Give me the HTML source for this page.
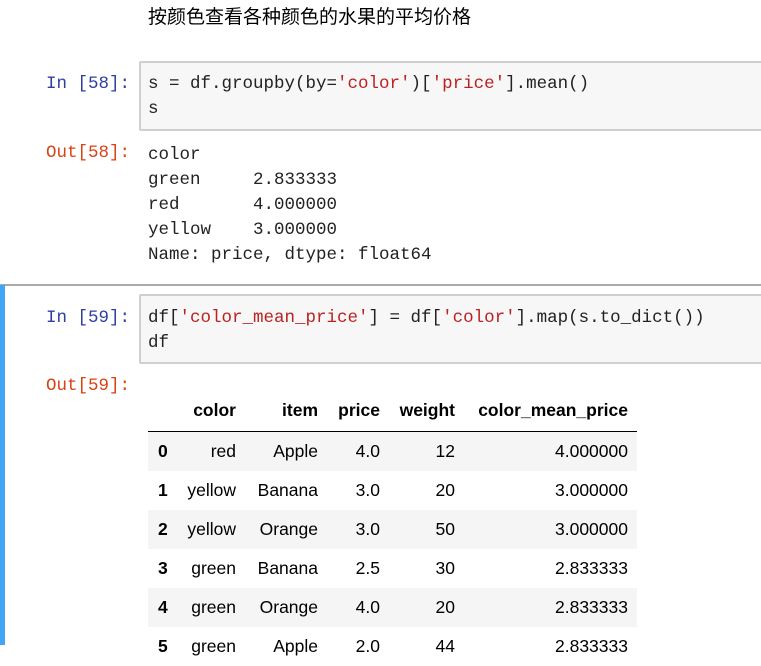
<!DOCTYPE html>
<html><head><meta charset="utf-8"><style>
body{margin:0;width:761px;height:645px;overflow:hidden;background:#fff;position:relative;font-family:"Liberation Sans","Noto Sans CJK SC",sans-serif;}
.abs{position:absolute;}
.mono{font-family:"Liberation Mono","Noto Sans CJK SC",monospace;font-size:17.5px;line-height:25px;color:#222;white-space:pre;}
.box{position:absolute;left:139px;right:-5px;background:#f7f7f7;border:2px solid #cfcfcf;border-radius:2px;}
.pin{color:#303F9F;}
.pout{color:#D84315;}
.s{color:#BA2121;}
table{border-collapse:collapse;font-size:17.5px;color:#000;table-layout:fixed;}
td,th{text-align:right;padding:0 9px 0 0;height:39px;white-space:nowrap;}
th{font-weight:bold;}
thead th{height:39px;border-bottom:1px solid #000;vertical-align:bottom;padding-bottom:10px;}
tbody tr:nth-child(odd){background:#f5f5f5;}
</style></head><body>
<div class="abs" style="left:148px;top:5px;font-size:19px;line-height:26px;color:#000;">按颜色查看各种颜色的水果的平均价格</div>

<div class="box" style="top:61px;height:66px;"></div>
<div class="abs mono pin" style="left:46px;top:72px;">In [58]:</div>
<div class="abs mono" style="left:148px;top:72px;">s = df.groupby(by=<span class="s">'color'</span>)[<span class="s">'price'</span>].mean()
s</div>
<div class="abs mono pout" style="left:46px;top:141px;">Out[58]:</div>
<div class="abs mono" style="left:148px;top:143px;">color
green     2.833333
red       4.000000
yellow    3.000000
Name: price, dtype: float64</div>

<div class="abs" style="left:0;top:284px;width:761px;height:2px;background:#ababab;"></div>
<div class="abs" style="left:0;top:285px;width:5px;height:360px;background:#42A5F5;"></div>

<div class="box" style="top:294px;height:66px;"></div>
<div class="abs mono pin" style="left:46px;top:306px;">In [59]:</div>
<div class="abs mono" style="left:148px;top:306px;">df[<span class="s">'color_mean_price'</span>] = df[<span class="s">'color'</span>].map(s.to_dict())
df</div>
<div class="abs mono pout" style="left:46px;top:374px;">Out[59]:</div>

<table class="abs" style="left:148px;top:382px;width:489px;">
<colgroup><col style="width:30px"><col style="width:67px"><col style="width:82px"><col style="width:62px"><col style="width:75px"><col style="width:173px"></colgroup>
<thead><tr><th></th><th>color</th><th>item</th><th>price</th><th>weight</th><th>color_mean_price</th></tr></thead>
<tbody>
<tr><th style="text-align:left;padding-left:10px">0</th><td>red</td><td>Apple</td><td>4.0</td><td>12</td><td>4.000000</td></tr>
<tr><th style="text-align:left;padding-left:10px">1</th><td>yellow</td><td>Banana</td><td>3.0</td><td>20</td><td>3.000000</td></tr>
<tr><th style="text-align:left;padding-left:10px">2</th><td>yellow</td><td>Orange</td><td>3.0</td><td>50</td><td>3.000000</td></tr>
<tr><th style="text-align:left;padding-left:10px">3</th><td>green</td><td>Banana</td><td>2.5</td><td>30</td><td>2.833333</td></tr>
<tr><th style="text-align:left;padding-left:10px">4</th><td>green</td><td>Orange</td><td>4.0</td><td>20</td><td>2.833333</td></tr>
<tr><th style="text-align:left;padding-left:10px">5</th><td>green</td><td>Apple</td><td>2.0</td><td>44</td><td>2.833333</td></tr>
</tbody></table>
</body></html>
